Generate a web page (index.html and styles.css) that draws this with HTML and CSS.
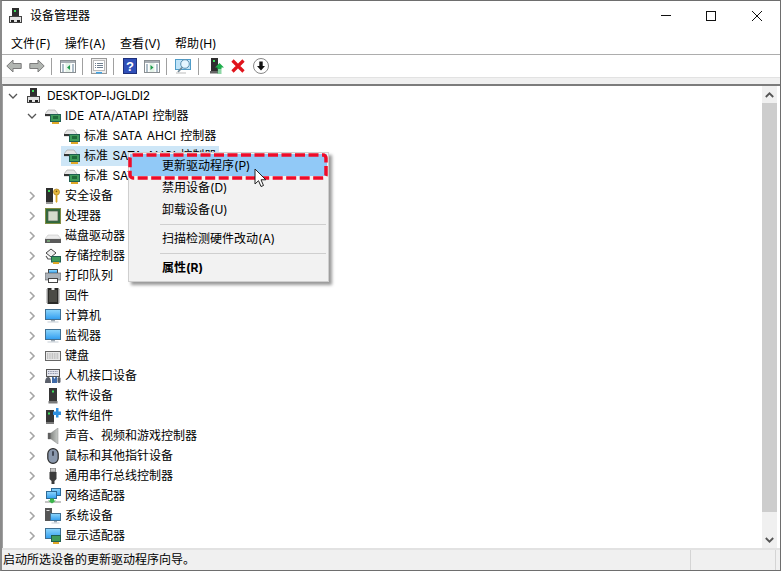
FILE: index.html
```html
<!DOCTYPE html>
<html lang="zh-CN">
<head>
<meta charset="utf-8">
<title>设备管理器</title>
<link rel="stylesheet" href="styles.css">
</head>
<body>
<svg class="defs" width="0" height="0">
  <defs>
    <linearGradient id="sky" x1="0" y1="0" x2="0" y2="1"><stop offset="0" stop-color="#8ed6fb"/><stop offset="1" stop-color="#2f9df0"/></linearGradient>
    <linearGradient id="cone" x1="0" y1="0" x2="1" y2="0"><stop offset="0" stop-color="#6d706d"/><stop offset="1" stop-color="#c9ccc9"/></linearGradient>
    <symbol id="pc" viewBox="0 0 16 16"><rect x="4" y="0" width="7" height="9" fill="#2e2e2e"/><rect x="6" y="2" width="2" height="2" fill="#3fdc5c"/><rect x="1.500" y="8.500" width="12" height="6" fill="#e2e2e2" stroke="#444"/><rect x="3" y="12" width="3" height="2" fill="#222"/><rect x="9" y="12" width="3" height="2" fill="#222"/></symbol>
    <symbol id="ide" viewBox="0 0 16 16"><path d="M0 6l3-4h7l3 4v2H0z" fill="#e4e4e4" stroke="#9a9a9a" stroke-width=".6"/><rect x="0" y="6" width="6" height="2" fill="#333"/><rect x="5.500" y="6.500" width="10" height="7" fill="#3f9a5a" stroke="#1f5f50"/><rect x="8" y="8" width="5" height="3" fill="#1e6a38"/><path d="M7 14h7v2H7z" fill="#e0a828"/></symbol>
    <symbol id="key" viewBox="0 0 16 16"><rect x="1" y="0" width="7" height="14" fill="#2e2e2e"/><rect x="3" y="2" width="2" height="2" fill="#3fdc5c"/><rect x="1" y="14" width="7" height="2" fill="#999"/><circle cx="11.500" cy="4" r="3" fill="#e8b93c" stroke="#a77d18" stroke-width=".7"/><circle cx="11.500" cy="3.300" r=".9" fill="#7a5a10"/><path d="M10.600 7h1.800v6.500l-.9 1.500-.9-1.500z" fill="#d9a520"/></symbol>
    <symbol id="cpu" viewBox="0 0 16 16"><rect x="0" y="0" width="16" height="16" fill="#2f6a3c"/><rect x=".5" y=".5" width="15" height="15" fill="none" stroke="#d5b04a" stroke-dasharray="1 1"/><rect x="3" y="3" width="10" height="10" fill="#d4dccd" stroke="#4c5a4c" stroke-width=".7"/></symbol>
    <symbol id="disk" viewBox="0 0 16 16"><path d="M3 7h10l3 4H0z" fill="#ececec" stroke="#bbb" stroke-width=".5"/><rect x="0" y="11" width="16" height="4" fill="#5a5a5a"/><rect x="2" y="12.500" width="3" height="1" fill="#8fe08f"/></symbol>
    <symbol id="store" viewBox="0 0 16 16"><path d="M1 5l5-4 5 4-5 4z" fill="#f0f0f0" stroke="#444" stroke-width="1"/><path d="M1 8l2 3h3" fill="none" stroke="#555" stroke-width="1.200"/><rect x="6.500" y="8.500" width="9" height="5.500" fill="#3f9a5a" stroke="#1f5f50"/><rect x="8" y="14" width="6" height="2" fill="#e0a828"/></symbol>
    <symbol id="print" viewBox="0 0 16 16"><rect x="3.500" y="1.500" width="9" height="4" fill="#fff" stroke="#444"/><rect x="4" y="2" width="8" height="3" fill="url(#sky)"/><rect x="0" y="5" width="16" height="7" fill="#aab1b8" stroke="#555" stroke-width=".6"/><rect x="3.500" y="10.500" width="9" height="4" fill="#fff" stroke="#444"/></symbol>
    <symbol id="chip" viewBox="0 0 16 16"><rect x="2.500" y="0" width="11" height="16" fill="#2a2a28"/><path d="M2.500 2H1M2.500 4H1M2.500 6H1M2.500 8H1M2.500 10H1M2.500 12H1M2.500 14H1M13.500 2H15M13.500 4H15M13.500 6H15M13.500 8H15M13.500 10H15M13.500 12H15M13.500 14H15" stroke="#999"/><rect x="4" y="2" width="8" height="12" fill="#4b4b46"/><path d="M6.500 0h3v2h-3z" fill="#eee"/></symbol>
    <symbol id="monitor" viewBox="0 0 16 16"><rect x=".5" y="1.500" width="15" height="10" fill="url(#sky)" stroke="#3f6f92"/><rect x="6" y="12" width="4" height="1.500" fill="#9aa6b0"/><rect x="2.500" y="13.500" width="11" height="1" fill="#c8d0d8"/></symbol>
    <symbol id="kbd" viewBox="0 0 16 16"><rect x=".5" y="3.500" width="15" height="9" fill="#e8e8e8" stroke="#666"/><path d="M2 6h12M2 8h12M2 10h12" stroke="#9a9a9a" stroke-dasharray="1 .7"/></symbol>
    <symbol id="hid" viewBox="0 0 16 16"><rect x="1.500" y="1.500" width="13" height="7" fill="#e4e6ee" stroke="#555"/><path d="M3 3.500h10M3 5.500h10" stroke="#8a8fa8" stroke-dasharray="1 .7"/><path d="M0 15c0-5 2-6 3.500-6S6 11 6 15z" fill="#5a5f6a"/><path d="M7 15V9h1.500l1 2 1-2H12v6z" fill="#3f6aa8"/><rect x="12.500" y="9" width="3" height="6" rx="1.500" fill="#5a5f6a"/></symbol>
    <symbol id="tower" viewBox="0 0 16 16"><rect x="4" y="0" width="8" height="13" fill="#363636"/><rect x="7" y="2.500" width="2" height="2" fill="#3fdc5c"/><rect x="3.500" y="13" width="9" height="2.500" fill="#7a7a7a"/></symbol>
    <symbol id="comp" viewBox="0 0 16 16"><rect x="1" y="2" width="8" height="12" fill="#363636"/><rect x="3" y="4.500" width="2" height="2" fill="#3fdc5c"/><rect x="1" y="14" width="8" height="2" fill="#7a7a7a"/><path d="M8 3.500h3V0h2.500v3.500H16V7h-2.500v2.500H11V7H8z" fill="#2f8fe0"/></symbol>
    <symbol id="sound" viewBox="0 0 16 16"><path d="M3 5h3l7-5v16l-7-5H3z" fill="url(#cone)" stroke="#8a8a8a" stroke-width=".5"/><rect x="3" y="5" width="2.500" height="6" fill="#5f5f5f"/></symbol>
    <symbol id="mouse" viewBox="0 0 16 16"><rect x="2.800" y=".6" width="10.400" height="14.800" rx="5.200" fill="#8a98ad" stroke="#2a2a2a" stroke-width="1.200"/><rect x="7" y="3" width="2" height="5" rx="1" fill="#3f4655"/></symbol>
    <symbol id="usb" viewBox="0 0 16 16"><rect x="5.500" y="0" width="5" height="4" fill="#c4c4c4" stroke="#555" stroke-width=".6"/><path d="M4.500 4h7v7l-2 2v3h-3v-3l-2-2z" fill="#3b3b3b"/></symbol>
    <symbol id="net" viewBox="0 0 16 16"><rect x="6.500" y=".5" width="9" height="7" fill="url(#sky)" stroke="#2d6a96"/><rect x="1.500" y="3.500" width="10" height="7" fill="url(#sky)" stroke="#2d6a96"/><path d="M0 14h16" stroke="#c4c4c4" stroke-width="2"/><path d="M5 10.500h4v2h2l-4 3-4-3h2z" fill="#3ab54a"/></symbol>
    <symbol id="sys" viewBox="0 0 16 16"><rect x="0" y="0" width="7" height="13" fill="#555"/><rect x="1.500" y="2" width="3" height="1" fill="#ddd"/><rect x="5.500" y="5.500" width="10" height="7" fill="url(#sky)" stroke="#3f6f92"/><rect x="9" y="13" width="3" height="1.500" fill="#9aa6b0"/><rect x="6.500" y="14.500" width="8" height="1" fill="#c8d0d8"/></symbol>
    <symbol id="gpu" viewBox="0 0 16 16"><rect x=".5" y=".5" width="15" height="10" fill="url(#sky)" stroke="#3f6f92"/><rect x="6.500" y="7.500" width="9" height="6" fill="#3f9a5a" stroke="#1f5f50"/><rect x="8" y="14" width="6" height="2" fill="#e0a828"/></symbol>
    <symbol id="view-l" viewBox="0 0 16 16"><rect x=".5" y="2.500" width="15" height="12" fill="#fff" stroke="#8a8f92"/><rect x="1" y="3" width="14" height="2" fill="#a8aeb4"/><path d="M2 7h2M2 9h2M2 11h2M2 13h2M12 7h2M12 9h2M12 11h2M12 13h2" stroke="#5f7f94"/></symbol>
    <symbol id="chev-r" viewBox="0 0 10 10"><path d="M3 1l4 4-4 4" fill="none" stroke="#a6a6a6" stroke-width="1.600"/></symbol>
    <symbol id="chev-d" viewBox="0 0 10 10"><path d="M1 3l4 4 4-4" fill="none" stroke="#555" stroke-width="1.300"/></symbol>
  </defs>
</svg>
<div class="window">
  <header class="titlebar">
    <svg class="title-icon" width="16" height="16"><use href="#pc"/></svg>
    <span class="title-text">设备管理器</span>
    <div class="caption">
      <svg class="cap-btn" width="10" height="10" viewBox="0 0 10 10"><path d="M0 4.500h10" stroke="#111"/></svg>
      <svg class="cap-btn" width="10" height="10" viewBox="0 0 10 10"><rect x=".5" y=".5" width="9" height="9" fill="none" stroke="#111"/></svg>
      <svg class="cap-btn cap-close" width="10" height="10" viewBox="0 0 10 10"><path d="M0 0l10 10M10 0L0 10" stroke="#111" fill="none"/></svg>
    </div>
  </header>
  <nav class="menubar">
    <span class="menu-item">文件(F)</span>
    <span class="menu-item">操作(A)</span>
    <span class="menu-item">查看(V)</span>
    <span class="menu-item">帮助(H)</span>
  </nav>
  <div class="toolbar">
    <svg class="tb" width="16" height="16" viewBox="0 0 16 16"><path d="M.8 8l6.200-6v3.500h8.200v5H7V14z" fill="#b2b6b2" stroke="#7c7c7c"/></svg>
    <svg class="tb tb-next" width="16" height="16" viewBox="0 0 16 16"><path d="M15.200 8L9 2v3.500H.8v5H9V14z" fill="#b2b6b2" stroke="#7c7c7c"/></svg>
    <i class="tb-sep"></i>
    <svg class="tb" width="16" height="16" viewBox="0 0 16 16"><use href="#view-l"/><rect x="5.500" y="5" width="5" height="9" fill="#e4f2e8"/><path d="M10 7v5L7 9.500z" fill="#1f9a4a"/></svg>
    <i class="tb-sep"></i>
    <svg class="tb" width="16" height="16" viewBox="0 0 16 16"><rect x=".5" y=".5" width="15" height="15" fill="#eee" stroke="#9a9a9a"/><rect x="2.500" y="2.500" width="11" height="10" fill="#fff" stroke="#bbb"/><path d="M4 5.500h1M6 5.500h6M4 7.500h1M6 7.500h6M4 9.500h1M6 9.500h6" stroke="#6f7f8f"/><rect x="5" y="14" width="6" height="1.500" fill="#3fa3e4"/></svg>
    <i class="tb-sep"></i>
    <svg class="tb tb-help" width="14" height="16" viewBox="0 0 14 16"><rect x=".5" y=".5" width="13" height="15" fill="#2f4fb8" stroke="#1d2f7a"/><text class="tb-q" x="7" y="13" text-anchor="middle">?</text></svg>
    <svg class="tb tb-next" width="16" height="16" viewBox="0 0 16 16"><use href="#view-l"/><rect x="5.500" y="5" width="5" height="9" fill="#e4f2e8"/><path d="M6.500 7v5L9.500 9.500z" fill="#1f9a4a"/></svg>
    <i class="tb-sep"></i>
    <svg class="tb" width="17" height="16" viewBox="0 0 17 16"><rect x=".5" y="1.500" width="15" height="10" fill="#bfe3f8" stroke="#4f9cc8"/><circle cx="10" cy="6" r="4.300" fill="#e4f5ff" stroke="#5b8fb0"/><path d="M7 9.500L3 14" stroke="#6d8593" stroke-width="1.700"/><path d="M1 15h10" stroke="#bbb"/></svg>
    <i class="tb-sep tb-sep-wide"></i>
    <svg class="tb" width="14" height="16" viewBox="0 0 14 16"><rect x="1" y="0" width="7" height="13" fill="#2e2e2e"/><rect x="3" y="2" width="2" height="2" fill="#3fdc5c"/><rect x="0" y="13" width="8" height="2.500" fill="#666"/><path d="M9.500 5l4.500 4.500h-2.500v2h-4v-2H5z" fill="#1fae4c"/><path d="M7.500 12.500h4v1h-4zM7.500 14.500h4v1h-4z" fill="#1fae4c"/></svg>
    <svg class="tb tb-x" width="14" height="14" viewBox="0 0 14 14"><path d="M1.500 1.500l11 11M12.500 1.500l-11 11" stroke="#e0141c" stroke-width="3.200"/></svg>
    <svg class="tb tb-down" width="16" height="16" viewBox="0 0 16 16"><circle cx="8" cy="8" r="7.500" fill="#fff" stroke="#888"/><path d="M6.300 3.500h3.400V8H12l-4 4.500L4 8h2.300z" fill="#111"/></svg>
  </div>
  <div class="bandbar"></div>
  <div class="content">
    <div class="tree">
      <div class="row"><svg class="chev" width="10" height="10"><use href="#chev-d"/></svg><svg class="ic-root" width="16" height="16"><use href="#pc"/></svg><span class="label-root">DESKTOP-IJGLDI2</span></div>
      <div class="row d1"><svg class="chev" width="10" height="10"><use href="#chev-d"/></svg><svg class="ic" width="16" height="16"><use href="#ide"/></svg><span class="label">IDE ATA/ATAPI 控制器</span></div>
      <div class="row d2"><svg class="ic" width="16" height="16"><use href="#ide"/></svg><span class="label">标准 SATA AHCI 控制器</span></div>
      <div class="row d2"><div class="selected"><svg class="ic" width="16" height="16"><use href="#ide"/></svg><span class="label">标准 SATA AHCI 控制器</span></div></div>
      <div class="row d2"><svg class="ic" width="16" height="16"><use href="#ide"/></svg><span class="label">标准 SATA AHCI 控制器</span></div>
      <div class="row d1"><svg class="chev" width="10" height="10"><use href="#chev-r"/></svg><svg class="ic" width="16" height="16"><use href="#key"/></svg><span class="label">安全设备</span></div>
      <div class="row d1"><svg class="chev" width="10" height="10"><use href="#chev-r"/></svg><svg class="ic" width="16" height="16"><use href="#cpu"/></svg><span class="label">处理器</span></div>
      <div class="row d1"><svg class="chev" width="10" height="10"><use href="#chev-r"/></svg><svg class="ic" width="16" height="16"><use href="#disk"/></svg><span class="label">磁盘驱动器</span></div>
      <div class="row d1"><svg class="chev" width="10" height="10"><use href="#chev-r"/></svg><svg class="ic" width="16" height="16"><use href="#store"/></svg><span class="label">存储控制器</span></div>
      <div class="row d1"><svg class="chev" width="10" height="10"><use href="#chev-r"/></svg><svg class="ic" width="16" height="16"><use href="#print"/></svg><span class="label">打印队列</span></div>
      <div class="row d1"><svg class="chev" width="10" height="10"><use href="#chev-r"/></svg><svg class="ic" width="16" height="16"><use href="#chip"/></svg><span class="label">固件</span></div>
      <div class="row d1"><svg class="chev" width="10" height="10"><use href="#chev-r"/></svg><svg class="ic" width="16" height="16"><use href="#monitor"/></svg><span class="label">计算机</span></div>
      <div class="row d1"><svg class="chev" width="10" height="10"><use href="#chev-r"/></svg><svg class="ic" width="16" height="16"><use href="#monitor"/></svg><span class="label">监视器</span></div>
      <div class="row d1"><svg class="chev" width="10" height="10"><use href="#chev-r"/></svg><svg class="ic" width="16" height="16"><use href="#kbd"/></svg><span class="label">键盘</span></div>
      <div class="row d1"><svg class="chev" width="10" height="10"><use href="#chev-r"/></svg><svg class="ic" width="16" height="16"><use href="#hid"/></svg><span class="label">人机接口设备</span></div>
      <div class="row d1"><svg class="chev" width="10" height="10"><use href="#chev-r"/></svg><svg class="ic" width="16" height="16"><use href="#tower"/></svg><span class="label">软件设备</span></div>
      <div class="row d1"><svg class="chev" width="10" height="10"><use href="#chev-r"/></svg><svg class="ic" width="16" height="16"><use href="#comp"/></svg><span class="label">软件组件</span></div>
      <div class="row d1"><svg class="chev" width="10" height="10"><use href="#chev-r"/></svg><svg class="ic" width="16" height="16"><use href="#sound"/></svg><span class="label">声音、视频和游戏控制器</span></div>
      <div class="row d1"><svg class="chev" width="10" height="10"><use href="#chev-r"/></svg><svg class="ic" width="16" height="16"><use href="#mouse"/></svg><span class="label">鼠标和其他指针设备</span></div>
      <div class="row d1"><svg class="chev" width="10" height="10"><use href="#chev-r"/></svg><svg class="ic" width="16" height="16"><use href="#usb"/></svg><span class="label">通用串行总线控制器</span></div>
      <div class="row d1"><svg class="chev" width="10" height="10"><use href="#chev-r"/></svg><svg class="ic" width="16" height="16"><use href="#net"/></svg><span class="label">网络适配器</span></div>
      <div class="row d1"><svg class="chev" width="10" height="10"><use href="#chev-r"/></svg><svg class="ic" width="16" height="16"><use href="#sys"/></svg><span class="label">系统设备</span></div>
      <div class="row d1"><svg class="chev" width="10" height="10"><use href="#chev-r"/></svg><svg class="ic" width="16" height="16"><use href="#gpu"/></svg><span class="label">显示适配器</span></div>
    </div>
    <div class="scrollbar">
      <div class="sb-btn"><svg width="9" height="6" viewBox="0 0 9 6"><path d="M.8 5l3.700-3.700L8.200 5" fill="none" stroke="#555" stroke-width="1.800"/></svg></div>
      <div class="sb-thumb"></div>
      <div class="sb-rest"><svg width="9" height="6" viewBox="0 0 9 6"><path d="M.8 1l3.700 3.700L8.200 1" fill="none" stroke="#555" stroke-width="1.800"/></svg></div>
    </div>
  </div>
  <footer class="statusbar">
    <span class="status-main">启动所选设备的更新驱动程序向导。</span>
    <span class="status-cell"></span>
    <span class="status-end"></span>
  </footer>
  <div class="context-menu">
    <div class="cm-item cm-active">更新驱动程序(P)</div>
    <div class="cm-item">禁用设备(D)</div>
    <div class="cm-item">卸载设备(U)</div>
    <hr class="cm-sep">
    <div class="cm-item">扫描检测硬件改动(A)</div>
    <hr class="cm-sep">
    <div class="cm-item cm-bold">属性(R)</div>
  </div>
  <svg class="callout" width="200" height="27" viewBox="0 0 200 27"><rect x="2" y="2" width="196" height="23" rx="3" fill="none" stroke="#ee0c2a" stroke-width="3.500" stroke-dasharray="10 3.500"/></svg>
  <svg class="cursor" width="13" height="20" viewBox="0 0 13 20"><path d="M1 1v15l3.500-3.300L7 18.500l2.500-1-2.500-5.700h4.800z" fill="#fff" stroke="#222"/></svg>
</div>
</body>
</html>
```
FILE: styles.css
```css
* { box-sizing: border-box; }
html, body { margin: 0; padding: 0; }
body {
  width: 781px;
  height: 572px;
  overflow: hidden;
  background: #fff;
  font: 12px/20px "Inter", "Noto Sans CJK SC", sans-serif;
  color: #000;
}
.defs { position: absolute; }
.window {
  position: relative;
  width: 781px;
  height: 571px;
  border-top: 1px solid #6e6e6e;
  border-left: 2px solid #8a8a8a;
  border-right: 1px solid #6e6e6e;
  border-bottom: 1px solid #6e6e6e;
  display: flex;
  flex-direction: column;
  background: #fff;
}
.titlebar { height: 29px; display: flex; align-items: center; padding-left: 6px; flex: none; }
.title-icon { margin-right: 6px; display: block; }
.title-text { flex: 1; }
.caption { display: flex; align-items: center; padding-right: 18px; }
.cap-btn { display: block; margin-left: 35px; }
.cap-close { margin-left: 36px; }
.menubar {
  height: 25px;
  flex: none;
  display: flex;
  padding: 4px 0 0 9px;
  gap: 14px;
  border-bottom: 1px solid #adadad;
}
.menu-item { display: block; white-space: nowrap; }
.toolbar { height: 22px; flex: none; display: flex; align-items: center; padding-left: 4px; }
.tb { display: block; flex: none; }
.tb-next { margin-left: 7px; }
.tb-sep { width: 1px; height: 17px; background: #a0a0a0; margin: 0 8px 0 6px; flex: none; }
.tb-sep-wide { margin-right: 11px; }
.tb-help { margin-left: 1px; }
.tb-q { font: bold 13px "Liberation Sans", sans-serif; fill: #fff; }
.tb-x { margin-left: 7px; }
.tb-down { margin-left: 8px; }
.bandbar { height: 7px; flex: none; background: #f0f0f0; border-top: 1px solid #e2e2e2; }
.content {
  flex: 1;
  min-height: 0;
  display: flex;
  border-top: 2px solid #7c7c7c;
  border-left: 1px solid #a0a0a0;
  overflow: hidden;
}
.tree { flex: 1; overflow: hidden; }
.row { height: 20px; display: flex; align-items: center; padding-left: 5px; white-space: nowrap; }
.chev { flex: none; margin-right: 8px; }
.ic-root { flex: none; margin-right: 5px; }
.label-root { letter-spacing: -.2px; }
.label { word-spacing: 1px; }
.d1 { padding-left: 24px; }
.d2 { padding-left: 61px; }
.ic { flex: none; margin-right: 4px; }
.selected {
  display: flex;
  align-items: center;
  width: 158px;
  height: 20px;
  margin-left: -3px;
  padding-left: 3px;
  background: #cde6f7;
}
.scrollbar { width: 15px; flex: none; margin-right: 3px; background: #f0f0f0; display: flex; flex-direction: column; }
.sb-btn { height: 17px; display: flex; align-items: center; justify-content: center; flex: none; }
.sb-thumb { height: 409px; background: #cdcdcd; flex: none; }
.sb-rest { flex: 1; display: flex; align-items: flex-end; justify-content: center; padding-bottom: 5px; }
.statusbar {
  height: 22px;
  flex: none;
  display: flex;
  background: #f0f0f0;
  border-top: 2px solid #e2e2e2;
}
.status-main { width: 689px; padding-left: 1px; border-right: 1px solid #d4d4d4; flex: none; }
.status-cell { width: 85px; border-right: 1px solid #d4d4d4; flex: none; }
.status-end { flex: 1; }
.context-menu {
  position: absolute;
  left: 126px;
  top: 151px;
  width: 201px;
  height: 130px;
  padding: 1px;
  background: #f2f2f2;
  border: 1px solid #cfcfcf;
  box-shadow: 3px 3px 3px rgba(0, 0, 0, .4);
}
.cm-item { height: 22px; line-height: 24px; padding-left: 32px; }
.cm-active { background: #91c9f7; }
.cm-bold { font-weight: 700; }
.cm-sep { height: 1px; border: 0; background: #cfcfcf; margin: 4px 1px 2px 30px; }
.callout { position: absolute; left: 126px; top: 152px; }
.cursor { position: absolute; left: 252px; top: 167px; }
```
